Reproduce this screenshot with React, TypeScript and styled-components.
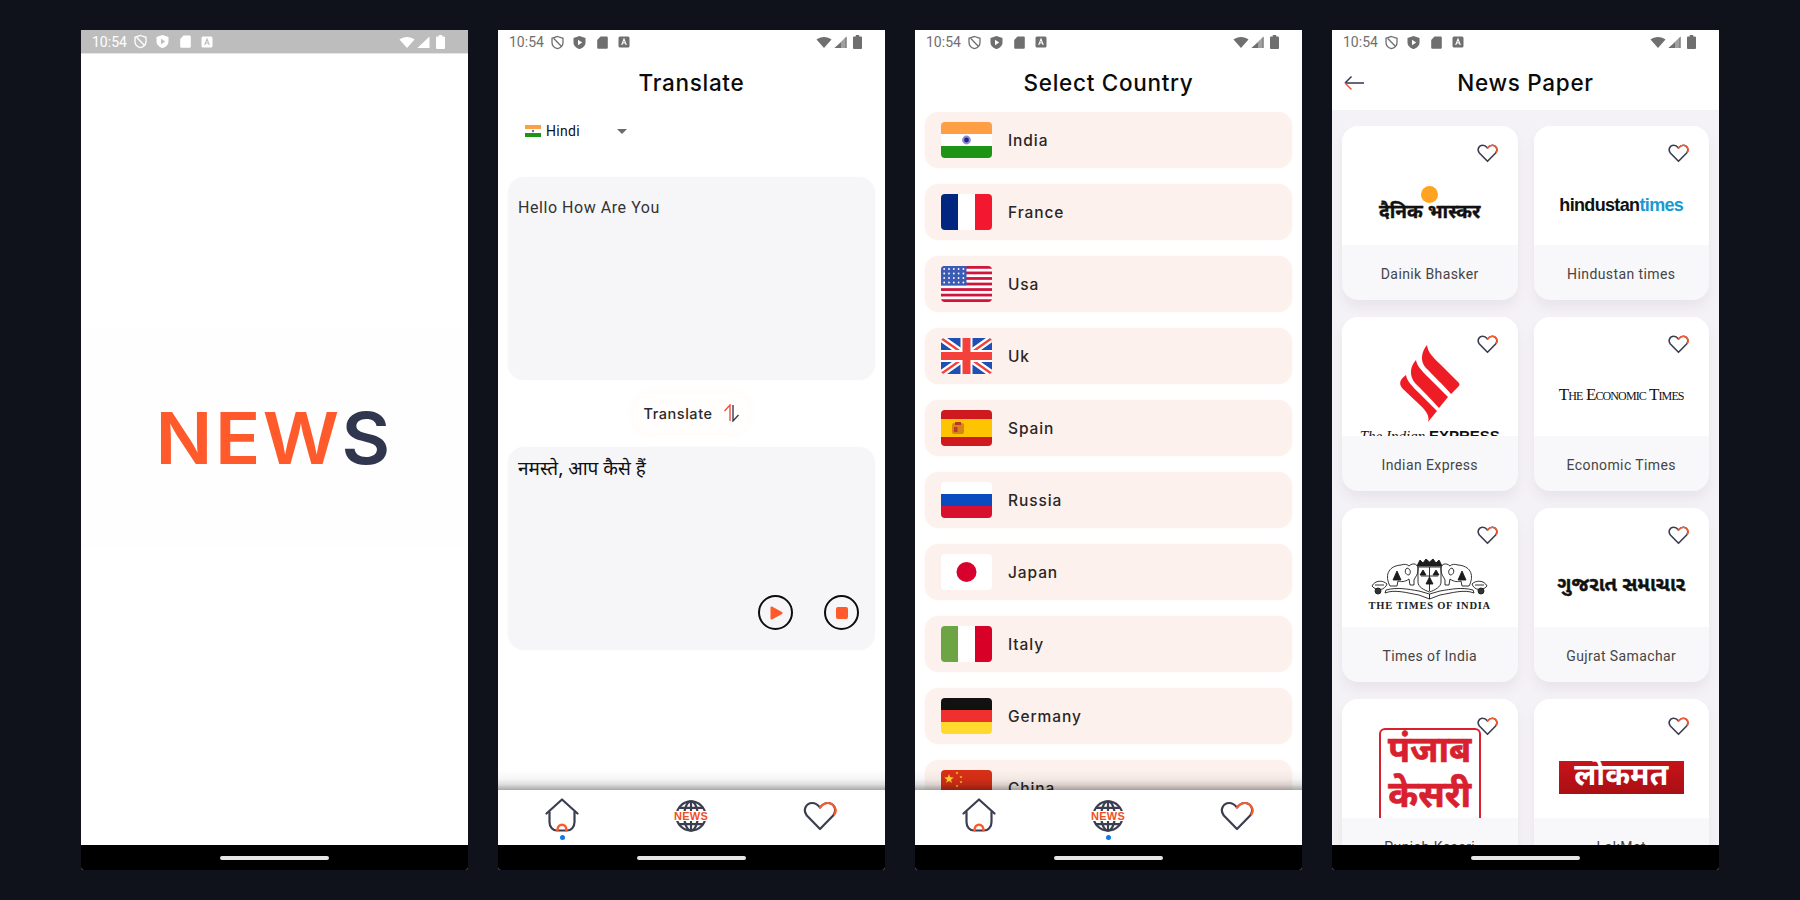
import React from 'react'
import styled, { createGlobalStyle } from 'styled-components'

const GlobalStyle = createGlobalStyle`
  html, body {
    margin: 0;
    padding: 0;
    background: #10121b;
  }
`

const Page = styled.div`
  width: 1800px;
  height: 900px;
  display: flex;
  justify-content: center;
  gap: 30px;
  padding-top: 30px;
  box-sizing: border-box;
  background: #10121b;
`

const Phone = styled.div`
  width: 387px;
  height: 840px;
  display: flex;
  flex-direction: column;
  background: #fff;
  overflow: hidden;
  border-radius: 0 0 3px 3px;
`

const StatusBarWrap = styled.div<{ $dim?: boolean }>`
  height: 24px;
  flex: none;
  display: flex;
  align-items: center;
  justify-content: space-between;
  padding: 0 23px 0 11px;
  color: ${p => (p.$dim ? '#ffffff' : '#6f6f6f')};
  background: ${p => (p.$dim ? '#bdbdbd' : '#fff')};
  border-bottom: ${p => (p.$dim ? '1px solid #e4e4e4' : 'none')};
  box-sizing: border-box;
`

const StatusGroup = styled.div`
  display: flex;
  align-items: center;
  gap: 9.5px;
`

const StatusRight = styled.div`
  display: flex;
  align-items: center;
  gap: 2px;
`

const Clock = styled.span`
  font-family: Roboto, sans-serif;
  font-size: 14px;
  width: 36px;
  margin-right: -4px;
`

const NavStrip = styled.div`
  height: 25px;
  flex: none;
  display: flex;
  justify-content: center;
  align-items: center;
  background: #000;
`

const HomePill = styled.div`
  width: 109px;
  height: 4px;
  border-radius: 2px;
  background: #e6e6e6;
`

const Splash = styled.div`
  flex: 1;
  display: flex;
  align-items: center;
  padding-bottom: 24px;
`

const SplashBand = styled.div`
  width: 100%;
  height: 220px;
  background: #fdfefd;
  display: flex;
  align-items: center;
  justify-content: center;
`

const Logo = styled.div`
  font-family: Inter, sans-serif;
  font-size: 72px;
  line-height: 72px;
  font-weight: 600;
  letter-spacing: 2.5px;
  color: #ff5a2c;
  transform: scaleX(1.04);
`

const LogoDark = styled.span`
  color: #31364f;
`

const Header = styled.div<{ $height: number; $shift?: number }>`
  height: ${p => p.$height}px;
  padding-top: ${p => p.$shift ?? 0}px;
  box-sizing: border-box;
  flex: none;
  position: relative;
  display: flex;
  align-items: center;
  justify-content: center;
  background: #fff;
`

const Title = styled.h1`
  margin: -2px 0 0;
  font-family: Inter, sans-serif;
  font-size: 22.5px;
  font-weight: 500;
  letter-spacing: 0.7px;
  color: #0b0b0b;
`

const BackArrow = styled.svg`
  position: absolute;
  left: 11px;
  top: 21px;
`

const Body = styled.div`
  flex: 1;
  min-height: 0;
  overflow: hidden;
`

const Dropdown = styled.div`
  height: 38px;
  width: 102px;
  margin-left: 27px;
  margin-bottom: 27px;
  display: flex;
  align-items: center;
  gap: 5px;
  font-family: Roboto, sans-serif;
  font-size: 14px;
  letter-spacing: 0.3px;
  color: #111;
`

const Caret = styled.span`
  margin-left: auto;
  width: 0;
  height: 0;
  border-left: 5px solid transparent;
  border-right: 5px solid transparent;
  border-top: 5px solid #6b6b6b;
`

const TextBox = styled.div<{ $pad: number }>`
  height: 203px;
  margin: 0 10px;
  padding: ${p => p.$pad}px 10px 0;
  box-sizing: border-box;
  display: flex;
  flex-direction: column;
  background: #f6f6f9;
  border-radius: 16px;
  box-shadow: 0 0 3px #f8f8fa;
`

const InputText = styled.div`
  font-family: Roboto, sans-serif;
  font-size: 16px;
  line-height: 20px;
  letter-spacing: 0.55px;
  color: #333;
`

const OutputText = styled.div`
  font-family: 'Noto Sans Devanagari', 'Lohit Devanagari', FreeSerif, FreeSans, 'Noto Serif Devanagari', serif;
  font-size: 19px;
  line-height: 24px;
  color: #111;
`

const Controls = styled.div`
  margin-top: auto;
  padding: 0 6px 20px 0;
  display: flex;
  justify-content: flex-end;
  gap: 31px;
`

const RoundButton = styled.div`
  width: 35px;
  height: 35px;
  box-sizing: border-box;
  border: 2px solid #0d0d0d;
  border-radius: 50%;
  display: flex;
  align-items: center;
  justify-content: center;
`

const StopSquare = styled.div`
  width: 12px;
  height: 12px;
  border-radius: 2px;
  background: #ff5a2c;
`

const TranslatePill = styled.div`
  width: 115px;
  height: 40px;
  margin: 13px auto 14px;
  display: flex;
  align-items: center;
  justify-content: center;
  gap: 10px;
  border-radius: 16px;
  background: #fffefd;
  box-shadow: 0 0 8px rgba(255, 190, 160, 0.12);
  font-family: Inter, sans-serif;
  font-size: 14.5px;
  font-weight: 500;
  letter-spacing: 0.55px;
  color: #2a2a2a;
`

const TabBar = styled.div`
  height: 55px;
  flex: none;
  position: relative;
  display: flex;
  justify-content: space-between;
  padding: 0 48px 0 47px;
  box-sizing: border-box;
  background: #fff;

  &::before {
    content: '';
    position: absolute;
    left: 0;
    right: 0;
    top: -20px;
    height: 20px;
    background: linear-gradient(
      to bottom,
      rgba(0, 0, 0, 0) 0%,
      rgba(0, 0, 0, 0.04) 45%,
      rgba(0, 0, 0, 0.13) 72%,
      rgba(0, 0, 0, 0.34) 100%
    );
  }
`

const Tab = styled.div<{ $top: number }>`
  position: relative;
  width: 34px;
  padding-top: ${p => p.$top}px;
  box-sizing: border-box;
  line-height: 0;
`

const TabDot = styled.div`
  position: absolute;
  top: 45px;
  left: 14.5px;
  width: 5px;
  height: 5px;
  border-radius: 50%;
  background: #0a7be8;
`

const CountryList = styled.div`
  display: flex;
  flex-direction: column;
  gap: 16px;
  padding: 0 10px;
`

const CountryRow = styled.div`
  height: 56px;
  flex: none;
  display: flex;
  align-items: center;
  gap: 16px;
  padding-left: 16px;
  border-radius: 14px;
  background: #fdf1ed;
  box-shadow: 0 0 3px #fdf3ef;
  font-family: Inter, sans-serif;
  font-size: 15.5px;
  font-weight: 500;
  letter-spacing: 0.9px;
  color: #2a2626;
`

const PaperGrid = styled.div`
  flex: 1;
  min-height: 0;
  overflow: hidden;
  display: grid;
  grid-template-columns: 1fr 1fr;
  grid-auto-rows: 174px;
  column-gap: 16px;
  row-gap: 17px;
  padding: 16px 10px 0;
  background: #f5f2f7;
`

const Card = styled.div`
  position: relative;
  display: flex;
  flex-direction: column;
  border-radius: 16px;
  background: #f8f7fa;
  box-shadow: 0 8px 12px rgba(70, 60, 90, 0.07);
  overflow: hidden;
`

const CardImage = styled.div`
  height: 119px;
  flex: none;
  overflow: hidden;
  display: flex;
  flex-direction: column;
  align-items: center;
  background: #fff;
`

const CardLabel = styled.div`
  flex: 1;
  display: flex;
  align-items: center;
  justify-content: center;
  padding-top: 2px;
  font-family: Roboto, sans-serif;
  font-size: 14px;
  letter-spacing: 0.4px;
  color: #454545;
`

const HeartSpot = styled.div`
  position: absolute;
  top: 18px;
  right: 20px;
  line-height: 0;
`

const BhaskarDot = styled.div`
  width: 17px;
  height: 17px;
  margin-top: 60px;
  border-radius: 50%;
  background: #ffa321;
  flex: none;
`

const devanagari = `'Noto Sans Devanagari', 'Lohit Devanagari', FreeSans, FreeSerif, sans-serif`

const BhaskarText = styled.div`
  margin-top: -2px;
  font-family: ${devanagari};
  font-size: 19px;
  line-height: 26px;
  font-weight: 700;
  -webkit-text-stroke: 0.4px #111;
  color: #111;
  white-space: nowrap;
`

const HindustanLogo = styled.div`
  margin-top: 69px;
  font-family: 'Liberation Sans', sans-serif;
  font-size: 18px;
  line-height: 20px;
  font-weight: 700;
  letter-spacing: -0.65px;
  color: #111;
`

const TimesBlue = styled.span`
  color: #1a9ad0;
`

const ExpressText = styled.div`
  font-family: 'Liberation Serif', serif;
  font-size: 15px;
  line-height: 16px;
  font-style: italic;
  color: #111;
  margin-top: 6px;
  white-space: nowrap;
`

const ExpressBold = styled.span`
  font-family: 'Liberation Sans', sans-serif;
  font-style: normal;
  font-weight: 700;
`

const EconomicLogo = styled.div`
  margin-top: 68px;
  font-family: 'Liberation Serif', serif;
  font-size: 17px;
  line-height: 20px;
  font-variant: small-caps;
  letter-spacing: -0.88px;
  color: #111;
  white-space: nowrap;
`

const TimesIndiaText = styled.div`
  font-family: 'Liberation Serif', serif;
  font-size: 10.5px;
  line-height: 12px;
  font-weight: 700;
  letter-spacing: 0.75px;
  color: #222;
  white-space: nowrap;
`

const GujaratLogo = styled.div`
  margin-top: 64px;
  font-family: 'Noto Sans Gujarati', 'Lohit Gujarati', FreeSans, FreeSerif, sans-serif;
  font-size: 20px;
  line-height: 28px;
  font-weight: 700;
  -webkit-text-stroke: 0.4px #111;
  color: #111;
  white-space: nowrap;
`

const KesariBox = styled.div`
  width: 102px;
  height: 110px;
  margin-top: 29px;
  flex: none;
  box-sizing: border-box;
  border: 2px solid #d8202f;
  border-bottom: none;
  border-radius: 6px 6px 0 0;
  display: flex;
  flex-direction: column;
  align-items: center;
  padding-top: 1px;
  font-family: ${devanagari};
  font-size: 36px;
  line-height: 45px;
  font-weight: 700;
  -webkit-text-stroke: 0.6px #d8202f;
  color: #d8202f;
  white-space: nowrap;
`

const LokmatBox = styled.div`
  width: 125px;
  height: 33px;
  margin-top: 62px;
  flex: none;
  display: flex;
  align-items: center;
  justify-content: center;
  background: linear-gradient(to bottom, #c8131a, #a90f14);
  font-family: ${devanagari};
  font-size: 30px;
  line-height: 33px;
  font-weight: 700;
  color: #fff;
`

const StatusBar = ({ dim }: { dim?: boolean }) => {
  const cut = dim ? '#bdbdbd' : '#fff'
  return (
    <StatusBarWrap $dim={dim}>
      <StatusGroup>
        <Clock>10:54</Clock>
        <svg width="13" height="15" viewBox="0 0 13 14" fill="none" stroke="currentColor" strokeWidth="1.3">
          <path d="M6.5 1 L12 2.8 V7 C12 10 9.5 12.3 6.5 13.2 C3.5 12.3 1 10 1 7 V2.8 Z" />
          <path d="M2.8 3 L10.5 11" />
        </svg>
        <svg width="13" height="15" viewBox="0 0 13 14" fill="currentColor">
          <path d="M6.5 0.5 L12.5 2.5 V7 C12.5 10.2 9.8 12.6 6.5 13.6 C3.2 12.6 0.5 10.2 0.5 7 V2.5 Z" />
          <path d="M5 4.2 L9.2 7 L5 9.8 Z" fill={cut} />
        </svg>
        <svg width="13" height="13" viewBox="0 0 11 13" fill="currentColor">
          <path d="M3.5 0.5 H9.5 C10.2 0.5 10.8 1 10.8 1.8 V11.5 C10.8 12.2 10.2 12.8 9.5 12.8 H1.5 C0.8 12.8 0.2 12.2 0.2 11.5 V4 Z" />
        </svg>
        <svg width="12" height="12" viewBox="0 0 12 12">
          <rect x="0.5" y="0.5" width="11" height="11" rx="1.5" fill="currentColor" />
          <path d="M3.7 9 L6 3 L8.3 9 M4.5 7 H7.5" fill="none" stroke={cut} strokeWidth="1.1" />
        </svg>
      </StatusGroup>
      <StatusRight>
        <svg width="16" height="12" viewBox="0 0 15 12" fill="currentColor">
          <path d="M0 3.5 C4 0 11 0 15 3.5 L7.5 12 Z" />
        </svg>
        <svg width="13" height="12" viewBox="0 0 13 12">
          <path d="M0.5 12 L12.5 0.5 V12 Z" fill={dim ? '#fff' : '#a0a0a0'} />
          <path d="M7 6.5 L7 12 H0.5 Z" fill="currentColor" />
          {!dim && <path d="M12.5 0.5 V12 H11.5 V2 Z" fill="#6f6f6f" />}
        </svg>
        <svg width="9" height="14" viewBox="0 0 9 14" fill="currentColor" style={{ marginLeft: 4 }}>
          <path d="M2.8 0 H6.2 V1.5 H8 C8.5 1.5 9 2 9 2.5 V13 C9 13.5 8.5 14 8 14 H1 C0.5 14 0 13.5 0 13 V2.5 C0 2 0.5 1.5 1 1.5 H2.8 Z" />
        </svg>
      </StatusRight>
    </StatusBarWrap>
  )
}

const Nav = () => (
  <NavStrip>
    <HomePill />
  </NavStrip>
)

const HeartIcon = ({ size, stroke }: { size: number; stroke: number }) => (
  <svg width={size} height={(size * 30) / 34} viewBox="0 0 34 30" fill="none" strokeLinecap="round" strokeLinejoin="round" strokeWidth={stroke}>
    <path d="M17 28 L3.8 14.5 C-0.5 9 3 2 9.2 2 C12.5 2 15 4 17 6.5 C19 4 21.5 2 24.8 2 C31 2 34.5 9 30.2 14.5 Z" stroke="#3a3e4f" />
    <path d="M17 6.5 C19 4 21.5 2 24.8 2 C31 2 34.5 9 31.5 13" stroke="#ff5a2c" />
  </svg>
)

const HomeIcon = () => (
  <svg width="34" height="34" viewBox="0 0 34 34" fill="none" stroke="#3a3e4f" strokeWidth="2.2" strokeLinecap="round" strokeLinejoin="round">
    <path d="M1.5 15.5 L17 1.5 L32.5 15.5" />
    <path d="M4.5 14 V24 C4.5 29.5 8 32.5 12 32.5 H22 C26 32.5 29.5 29.5 29.5 24 V14" />
    <path d="M12.5 32 C12.5 25 21.5 25 21.5 32" stroke="#ff5a2c" strokeWidth="2.6" />
  </svg>
)

const GlobeIcon = () => (
  <svg width="34" height="32" viewBox="0 0 34 32" fill="none">
    <g stroke="#3a3e4f" strokeWidth="2.2">
      <circle cx="17" cy="16" r="14.6" />
      <ellipse cx="17" cy="16" rx="6.8" ry="14.6" />
      <path d="M17 1.4 V30.6 M4.8 7.8 H29.2 M4.8 24.2 H29.2" />
    </g>
    <rect x="0" y="11" width="34" height="10" fill="#fff" />
    <text x="17" y="20" textAnchor="middle" fontFamily="'Liberation Sans', sans-serif" fontWeight="700" fontSize="11" letterSpacing="0.3" fill="#f0501f">NEWS</text>
  </svg>
)

const Tabs = ({ active }: { active: number }) => (
  <TabBar>
    <Tab $top={8}>
      <HomeIcon />
      {active === 0 && <TabDot />}
    </Tab>
    <Tab $top={10}>
      <GlobeIcon />
      {active === 1 && <TabDot />}
    </Tab>
    <Tab $top={11}>
      <HeartIcon size={34} stroke={2.2} />
    </Tab>
  </TabBar>
)

const clip = (id: string) => (
  <defs>
    <clipPath id={id}>
      <rect width="51" height="36" rx="4" />
    </clipPath>
  </defs>
)

const Stars = ({ x, y, r, fill }: { x: number; y: number; r: number; fill: string }) => {
  const pts = Array.from({ length: 10 })
    .map((_, i) => {
      const a = (Math.PI / 5) * i - Math.PI / 2
      const d = i % 2 === 0 ? r : r * 0.42
      return `${x + d * Math.cos(a)},${y + d * Math.sin(a)}`
    })
    .join(' ')
  return <polygon points={pts} fill={fill} />
}

const Flag = ({ code }: { code: string }) => {
  const id = `clip-${code}`
  let art: React.ReactNode = null
  if (code === 'in') {
    art = (
      <>
        <rect width="51" height="12" fill="#ff9f45" />
        <rect y="12" width="51" height="12" fill="#fff" />
        <rect y="24" width="51" height="12" fill="#1d9416" />
        <circle cx="25.5" cy="18" r="4.4" fill="#8a8fd0" />
        <circle cx="25.5" cy="18" r="2.4" fill="#23238e" />
      </>
    )
  } else if (code === 'fr') {
    art = (
      <>
        <rect width="17" height="36" fill="#00267f" />
        <rect x="17" width="17" height="36" fill="#fff" />
        <rect x="34" width="17" height="36" fill="#f31830" />
      </>
    )
  } else if (code === 'us') {
    art = (
      <>
        <rect width="51" height="36" fill="#fff" />
        {[0, 1, 2, 3, 4, 5, 6].map(i => (
          <rect key={i} y={i * 5.54} width="51" height="2.77" fill="#d0143c" />
        ))}
        <rect width="25.5" height="19.4" fill="#3c5bb5" />
        {[0, 1, 2, 3].map(r =>
          [0, 1, 2, 3, 4].map(c => <circle key={`${r}-${c}`} cx={3.2 + c * 4.8} cy={3 + r * 4.5} r="0.9" fill="#fff" />),
        )}
      </>
    )
  } else if (code === 'uk') {
    art = (
      <>
        <rect width="51" height="36" fill="#1f4fb3" />
        <path d="M0 0 L51 36 M51 0 L0 36" stroke="#fff" strokeWidth="7" />
        <path d="M0 0 L51 36 M51 0 L0 36" stroke="#f5413c" strokeWidth="2.4" />
        <path d="M25.5 0 V36 M0 18 H51" stroke="#fff" strokeWidth="12" />
        <path d="M25.5 0 V36 M0 18 H51" stroke="#f5413c" strokeWidth="8" />
      </>
    )
  } else if (code === 'es') {
    art = (
      <>
        <rect width="51" height="36" fill="#d0181f" />
        <rect y="9" width="51" height="18" fill="#ffc400" />
        <rect x="11" y="13" width="12" height="11" rx="2" fill="#d8841c" />
        <rect x="14" y="12" width="6" height="3" fill="#b8352a" />
        <rect x="13" y="17" width="3.5" height="5" fill="#c0392b" />
      </>
    )
  } else if (code === 'ru') {
    art = (
      <>
        <rect width="51" height="12" fill="#fff" />
        <rect y="12" width="51" height="12" fill="#0a4bc0" />
        <rect y="24" width="51" height="12" fill="#d8102f" />
      </>
    )
  } else if (code === 'jp') {
    art = (
      <>
        <rect width="51" height="36" fill="#fff" />
        <circle cx="25.5" cy="18" r="10" fill="#d8002c" />
      </>
    )
  } else if (code === 'it') {
    art = (
      <>
        <rect width="17" height="36" fill="#6da544" />
        <rect x="17" width="17" height="36" fill="#fff" />
        <rect x="34" width="17" height="36" fill="#d80027" />
      </>
    )
  } else if (code === 'de') {
    art = (
      <>
        <rect width="51" height="12" fill="#111" />
        <rect y="12" width="51" height="12" fill="#f0302f" />
        <rect y="24" width="51" height="12" fill="#ffd92d" />
      </>
    )
  } else if (code === 'cn') {
    art = (
      <>
        <rect width="51" height="36" fill="#d92f17" />
        <Stars x={8} y={9} r={5} fill="#ffd52e" />
        <Stars x={16} y={3} r={1.6} fill="#ffd52e" />
        <Stars x={20} y={7} r={1.6} fill="#ffd52e" />
        <Stars x={20} y={12} r={1.6} fill="#ffd52e" />
        <Stars x={16} y={16} r={1.6} fill="#ffd52e" />
      </>
    )
  }
  return (
    <svg width="51" height="36" viewBox="0 0 51 36" style={{ flex: 'none' }}>
      {clip(id)}
      <g clipPath={`url(#${id})`}>{art}</g>
    </svg>
  )
}

const countries = [
  ['in', 'India'],
  ['fr', 'France'],
  ['us', 'Usa'],
  ['uk', 'Uk'],
  ['es', 'Spain'],
  ['ru', 'Russia'],
  ['jp', 'Japan'],
  ['it', 'Italy'],
  ['de', 'Germany'],
  ['cn', 'China'],
]

const ExpressMark = () => (
  <svg width="61" height="77" viewBox="0 0 61 77" fill="#ee1c25" style={{ marginTop: 28, flex: 'none' }}>
    <path d="M28 0 C29 8 34 12 42 20 L59 37 C61 39 61 40 59 42 L52 49 C45 41 34 30 27 23 C21 17 22 7 28 0 Z" />
    <path d="M17 15 C18 21 22 25 30 33 L49 52 L40 63 C33 55 22 44 16 38 C10 31 11 21 17 15 Z" />
    <path d="M7 30 C8 36 12 40 20 48 L38 66 L29 77 C31 71 27 66 22 61 L4 44 C-1 39 1 34 7 30 Z" />
  </svg>
)

const EmblemHalf = () => (
  <>
    <path d="M20 26 C16 16 20 8 32 7 C35 6 38 6 40 8 C44 4 50 6 49 12 C49 17 46 19 45 22 L45 27 L41 27 L40 21 C36 24 32 24 29 23 L28 28 L21 28 Z" />
    <path d="M38 10 C35 12 36 17 40 17 C42 15 42 11 38 10 Z" />
    <path d="M28 13 L32 22 H24 Z" fill="#1c1c1c" />
    <path d="M3 28 C6 22 14 22 18 26 C16 32 8 34 3 28 Z M6 27 L15 27" />
    <circle cx="9" cy="33" r="3" fill="#333" />
    <path d="M16 35 C26 31 38 35 50 37 L60.5 41 V36 L50 33 C38 31 28 29 17 32 Z" />
  </>
)

const TimesEmblem = () => (
  <svg width="121" height="42" viewBox="0 0 121 42" fill="none" stroke="#1c1c1c" strokeWidth="0.9" style={{ marginTop: 50, flex: 'none' }}>
    <EmblemHalf />
    <g transform="translate(121 0) scale(-1 1)">
      <EmblemHalf />
    </g>
    <path d="M49 9 H72 V24 C72 29 66 32 60.5 34 C55 32 49 29 49 24 Z" />
    <path d="M48 8 L51 2 L54 5 L57 1 L60.5 4 L64 1 L67 5 L70 2 L73 8 Z" fill="#1c1c1c" />
    <path d="M52 18 H69 M60.5 9 V33" />
    <path d="M54 12 L57 17 H51 Z M67 12 L70 17 H64 Z M60.5 19 L64 26 H57 Z" fill="#1c1c1c" />
  </svg>
)

const papers: { name: string; logo: React.ReactNode }[] = [
  {
    name: 'Dainik Bhasker',
    logo: (
      <>
        <BhaskarDot />
        <BhaskarText>दैनिक भास्कर</BhaskarText>
      </>
    ),
  },
  {
    name: 'Hindustan times',
    logo: (
      <HindustanLogo>
        hindustan<TimesBlue>times</TimesBlue>
      </HindustanLogo>
    ),
  },
  {
    name: 'Indian Express',
    logo: (
      <>
        <ExpressMark />
        <ExpressText>
          The Indian <ExpressBold>EXPRESS</ExpressBold>
        </ExpressText>
      </>
    ),
  },
  { name: 'Economic Times', logo: <EconomicLogo>The Economic Times</EconomicLogo> },
  {
    name: 'Times of India',
    logo: (
      <>
        <TimesEmblem />
        <TimesIndiaText>THE TIMES OF INDIA</TimesIndiaText>
      </>
    ),
  },
  { name: 'Gujrat Samachar', logo: <GujaratLogo>ગુજરાત સમાચાર</GujaratLogo> },
  {
    name: 'Punjab Kesari',
    logo: (
      <KesariBox>
        <span>पंजाब</span>
        <span>केसरी</span>
      </KesariBox>
    ),
  },
  { name: 'LokMat', logo: <LokmatBox>लोकमत</LokmatBox> },
]

export default function App() {
  return (
    <Page>
      <GlobalStyle />

      <Phone>
        <StatusBar dim />
        <Splash>
          <SplashBand>
            <Logo>
              NEW
              <LogoDark>S</LogoDark>
            </Logo>
          </SplashBand>
        </Splash>
        <Nav />
      </Phone>

      <Phone>
        <StatusBar />
        <Header $height={58}>
          <Title>Translate</Title>
        </Header>
        <Body>
          <Dropdown>
            <svg width="16" height="12" viewBox="0 0 16 12">
              <rect width="16" height="4" fill="#ff9f45" />
              <rect y="4" width="16" height="4" fill="#fff" />
              <rect y="8" width="16" height="4" fill="#1d9416" />
              <circle cx="8" cy="6" r="1.2" fill="#6a6fb0" />
            </svg>
            Hindi
            <Caret />
          </Dropdown>
          <TextBox $pad={21}>
            <InputText>Hello How Are You</InputText>
          </TextBox>
          <TranslatePill>
            Translate
            <svg width="17" height="18" viewBox="0 0 17 18" fill="none" strokeWidth="1.4">
              <path d="M7 17 V1 L1.5 7" stroke="#f0523c" />
              <path d="M10 1 V17 L15.5 11" stroke="#3a3e4f" />
            </svg>
          </TranslatePill>
          <TextBox $pad={12}>
            <OutputText>नमस्ते, आप कैसे हैं</OutputText>
            <Controls>
              <RoundButton>
                <svg width="13" height="14" viewBox="0 0 13 14" style={{ marginLeft: 2 }}>
                  <path d="M1.5 1.5 L11.5 7 L1.5 12.5 Z" fill="#ff5a2c" stroke="#ff5a2c" strokeWidth="2" strokeLinejoin="round" />
                </svg>
              </RoundButton>
              <RoundButton>
                <StopSquare />
              </RoundButton>
            </Controls>
          </TextBox>
        </Body>
        <Tabs active={0} />
        <Nav />
      </Phone>

      <Phone>
        <StatusBar />
        <Header $height={58}>
          <Title>Select Country</Title>
        </Header>
        <Body>
          <CountryList>
            {countries.map(([code, name]) => (
              <CountryRow key={code}>
                <Flag code={code} />
                {name}
              </CountryRow>
            ))}
          </CountryList>
        </Body>
        <Tabs active={1} />
        <Nav />
      </Phone>

      <Phone>
        <StatusBar />
        <Header $height={56} $shift={2}>
          <BackArrow width="22" height="16" viewBox="0 0 22 16" fill="none" strokeWidth="1.5">
            <path d="M21 8 H2" stroke="#2f3350" />
            <path d="M8.5 1.5 L2 8" stroke="#2f3350" />
            <path d="M2 8 L8.5 14.5" stroke="#f0523c" />
          </BackArrow>
          <Title>News Paper</Title>
        </Header>
        <PaperGrid>
          {papers.map(p => (
            <Card key={p.name}>
              <CardImage>{p.logo}</CardImage>
              <CardLabel>{p.name}</CardLabel>
              <HeartSpot>
                <HeartIcon size={21} stroke={2.6} />
              </HeartSpot>
            </Card>
          ))}
        </PaperGrid>
        <Nav />
      </Phone>
    </Page>
  )
}
